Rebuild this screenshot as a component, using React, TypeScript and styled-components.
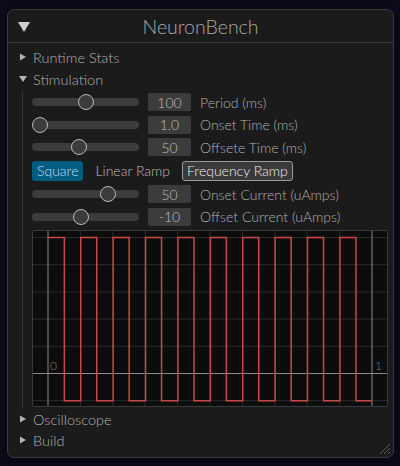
import React from "react";
import styled, { createGlobalStyle } from "styled-components";

const Global = createGlobalStyle`
  html, body { margin: 0; padding: 0; background: #0b0b1a; }
  body {
    width: 400px; height: 466px; overflow: hidden;
    font-family: Lato, "Noto Sans", sans-serif;
    font-weight: 300;
  }
`;

const Page = styled.div`
  box-sizing: border-box;
  width: 400px;
  height: 466px;
  padding: 9px 6px 8px 7px;
`;

const Window = styled.div`
  position: relative;
  box-sizing: border-box;
  width: 387px;
  height: 449px;
  background: #1b1b1b;
  border: 1px solid #3a3a3a;
  border-radius: 7px;
  display: flex;
  flex-direction: column;
  box-shadow: 0 2px 10px rgba(0, 0, 0, 0.45);
`;

const TitleBar = styled.div`
  height: 32px;
  border-bottom: 1px solid #3a3a3a;
  display: grid;
  grid-template-columns: 1fr auto 1fr;
  align-items: center;
  padding: 0 10px;
`;

const TitleText = styled.div`
  font-size: 19.5px;
  color: #a8a8a8;
`;

const Body = styled.div`
  display: flex;
  flex-direction: column;
  gap: 4px;
  padding: 5px 5px 0 10px;
`;

const HeaderRow = styled.div<{ $mt?: number }>`
  display: flex;
  align-items: center;
  gap: 5px;
  height: 18px;
  color: #b0b0b0;
  font-size: 14.5px;
  margin-top: ${(p) => p.$mt ?? 0}px;
`;

const Caret = styled.svg`
  width: 10px;
  height: 10px;
  flex: none;
`;

const Indent = styled.div`
  margin-left: 4px;
  border-left: 1px solid #3a3a3a;
  padding: 1px 0 0 9px;
  display: flex;
  flex-direction: column;
  gap: 4.5px;
`;

const Row = styled.div<{ $h?: number }>`
  display: flex;
  align-items: center;
  gap: 9px;
  height: ${(p) => p.$h ?? 18}px;
`;

const Track = styled.div`
  position: relative;
  flex: none;
  width: 107px;
  height: 8px;
  border-radius: 4px;
  background: #3c3c3c;
`;

const Knob = styled.div`
  position: absolute;
  top: 50%;
  box-sizing: border-box;
  width: 16px;
  height: 16px;
  margin: -8px 0 0 -8px;
  border-radius: 50%;
  background: #3c3c3c;
  border: 1.5px solid #b8b8b8;
`;

const ValueBox = styled.div`
  flex: none;
  width: 43px;
  height: 18px;
  border-radius: 2px;
  background: #3c3c3c;
  color: #bcbcbc;
  font-size: 14px;
  display: flex;
  align-items: center;
  justify-content: center;
`;

const Label = styled.span`
  color: #b0b0b0;
  font-size: 14px;
  white-space: nowrap;
`;

const ButtonRow = styled.div`
  display: flex;
  align-items: center;
  gap: 7px;
  height: 20px;
`;

const ModeButton = styled.div<{ $selected?: boolean; $hovered?: boolean }>`
  box-sizing: border-box;
  height: 20px;
  padding: 0 4px;
  display: flex;
  align-items: center;
  font-size: 14px;
  border-radius: 3px;
  white-space: nowrap;
  color: ${(p) => (p.$selected ? "#c0deff" : p.$hovered ? "#f0f0f0" : "#bcbcbc")};
  background: ${(p) => (p.$selected ? "#005c80" : p.$hovered ? "#3a3a3a" : "transparent")};
  border: 1px solid ${(p) => (p.$hovered ? "#9a9a9a" : "transparent")};
`;

const PlotFrame = styled.div`
  box-sizing: border-box;
  width: 356px;
  height: 177px;
  background: #0c0c0c;
  border: 1px solid #3a3a3a;
  border-radius: 2px;
  overflow: hidden;
  svg { display: block; }
`;

const Grip = styled.svg`
  position: absolute;
  right: 2px;
  bottom: 2px;
  width: 13px;
  height: 13px;
`;

function Tri({ down }: { down?: boolean }) {
  return (
    <Caret viewBox="0 0 10 10">
      {down ? <polygon points="1,2 9,2 5,8" fill="#b4b4b4" /> : <polygon points="2,1.5 8,5 2,8.5" fill="#b4b4b4" />}
    </Caret>
  );
}

const TRACK_START = 8;
const TRACK_SPAN = 91;

function Slider({ frac, value, label }: { frac: number; value: string; label: string }) {
  return (
    <Row>
      <Track>
        <Knob style={{ left: TRACK_START + frac * TRACK_SPAN }} />
      </Track>
      <ValueBox>{value}</ValueBox>
      <Label>{label}</Label>
    </Row>
  );
}

// Plot geometry (frame-relative coords)
const X0 = 16;
const XS = 324;
const Y0 = 143.5;
const YS = 2.72;
const px = (x: number) => X0 + x * XS;
const py = (y: number) => Y0 - y * YS;

function Plot() {
  const vlines: JSX.Element[] = [];
  for (let k = 0; k <= 10; k++) {
    const x = px(k / 10);
    const axis = k === 0 || k === 10;
    vlines.push(
      <line key={"v" + k} x1={x} x2={x} y1={0} y2={177} stroke={axis ? "#8a8a8a" : "#2c2c2c"} strokeWidth={1} />
    );
  }
  const hlines: JSX.Element[] = [];
  for (let j = -1; j <= 5; j++) {
    const y = py(j * 10);
    hlines.push(
      <line key={"h" + j} x1={0} x2={356} y1={y} y2={y} stroke={j === 0 ? "#8a8a8a" : "#2c2c2c"} strokeWidth={1} />
    );
  }
  let d = `M ${px(0.001)} ${py(50)}`;
  for (let k = 0; k < 10; k++) {
    const s = k / 10 + 0.001;
    const e = k / 10 + 0.0505;
    if (k > 0) d += ` L ${px(s)} ${py(-10)} L ${px(s)} ${py(50)}`;
    d += ` L ${px(e)} ${py(50)} L ${px(e)} ${py(-10)}`;
  }
  d += ` L ${px(1)} ${py(-10)}`;
  return (
    <PlotFrame>
      <svg width={354} height={175} viewBox="1 1 354 175">
        {hlines}
        {vlines}
        <path d={d} fill="none" stroke="#c84848" strokeWidth={1.5} />
        <text x={px(0) + 2} y={py(0) - 4} fontSize={12} fill="#7c7c7c" fontFamily="Lato, sans-serif">0</text>
        <text x={px(1) + 3} y={py(0) - 4} fontSize={12} fill="#7c7c7c" fontFamily="Lato, sans-serif">1</text>
      </svg>
    </PlotFrame>
  );
}

export default function App() {
  return (
    <>
      <Global />
      <Page>
        <Window>
          <TitleBar>
            <svg width="12" height="11" viewBox="0 0 12 11">
              <polygon points="0,1 12,1 6,11" fill="#d0d0d0" />
            </svg>
            <TitleText>NeuronBench</TitleText>
            <span />
          </TitleBar>
          <Body>
            <HeaderRow>
              <Tri />
              Runtime Stats
            </HeaderRow>
            <HeaderRow>
              <Tri down />
              Stimulation
            </HeaderRow>
            <Indent>
              <Slider frac={0.505} value="100" label="Period (ms)" />
              <Slider frac={0.0} value="1.0" label="Onset Time (ms)" />
              <Slider frac={0.43} value="50" label="Offsete Time (ms)" />
              <ButtonRow>
                <ModeButton $selected>Square</ModeButton>
                <ModeButton>Linear Ramp</ModeButton>
                <ModeButton $hovered>Frequency Ramp</ModeButton>
              </ButtonRow>
              <Slider frac={0.75} value="50" label="Onset Current (uAmps)" />
              <Slider frac={0.45} value="-10" label="Offset Current (uAmps)" />
              <Plot />
            </Indent>
            <HeaderRow $mt={-1}>
              <Tri />
              Oscilloscope
            </HeaderRow>
            <HeaderRow $mt={-1}>
              <Tri />
              Build
            </HeaderRow>
          </Body>
          <Grip viewBox="0 0 13 13">
            <line x1="12" y1="2" x2="2" y2="12" stroke="#5a5a5a" strokeWidth="1" />
            <line x1="12" y1="6" x2="6" y2="12" stroke="#5a5a5a" strokeWidth="1" />
            <line x1="12" y1="10" x2="10" y2="12" stroke="#5a5a5a" strokeWidth="1" />
          </Grip>
        </Window>
      </Page>
    </>
  );
}
